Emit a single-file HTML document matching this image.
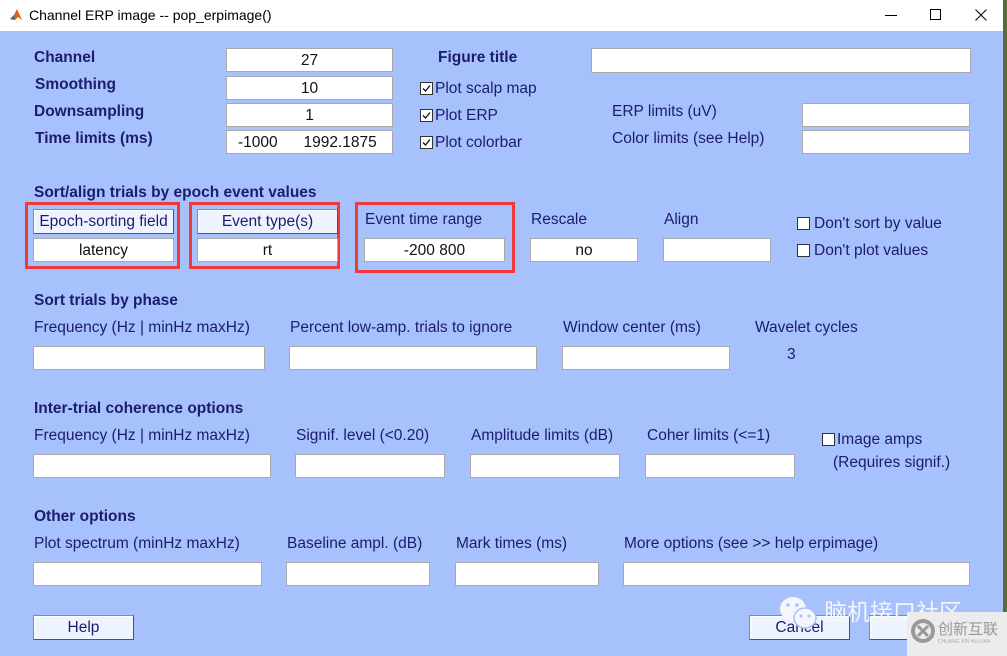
<!DOCTYPE html>
<html><head><meta charset="utf-8"><style>
*{margin:0;padding:0;box-sizing:border-box}
body{width:1007px;height:656px;overflow:hidden;background:#5a6b3a;position:relative;font-family:"Liberation Sans","Noto Sans CJK SC",sans-serif;}
.win{position:absolute;left:0;top:0;width:1003px;height:656px;background:#a7c1fc}
.tb{position:absolute;left:0;top:0;width:1003px;height:31px;background:#fff}
.a{position:absolute;white-space:nowrap}
.l{position:absolute;white-space:nowrap;font-size:15.5px;color:#1c1c6c;line-height:20px}
.b{font-weight:bold}
.i{position:absolute;background:#fff;border:1px solid #a9a9a9;text-align:center;font-size:15.5px;color:#111;line-height:23px}
.btn{position:absolute;background:#eef4ff;border:1px solid #8a8a8a;border-right-color:#555;border-bottom-color:#555;text-align:center;font-size:15.5px;color:#1c1c6c;line-height:23px;box-shadow:inset 1px 1px 0 #fff}
.r{position:absolute;border:3px solid #f03a3a}
.cb{position:absolute;width:13px;height:13px;background:#fff;border:1px solid #333}
</style></head><body>
<div class="win"></div>
<div class="tb"></div>
<svg class="a" style="left:9px;top:8px" width="14" height="14" viewBox="0 0 14 14"><path d="M1 11 L5 7 L8 1 L13 12 L9 9 L6 12 Z" fill="#e06010"/><path d="M1 11 L5 7 L6 12Z" fill="#2a6fb0"/></svg>
<div class="a" style="left:29px;top:7px;font-size:14px;color:#000">Channel ERP image -- pop_erpimage()</div>
<div class="a" style="left:885px;top:15px;width:12px;height:1px;background:#000"></div>
<div class="a" style="left:930px;top:9px;width:11px;height:11px;border:1px solid #000"></div>
<svg class="a" style="left:975px;top:9px" width="12" height="12"><path d="M0.5 0.5L11.5 11.5M11.5 0.5L0.5 11.5" stroke="#000" stroke-width="1"/></svg>

<div class="l b" style="left:34px;top:48px">Channel</div>
<div class="l b" style="left:35px;top:75px">Smoothing</div>
<div class="l b" style="left:34px;top:102px">Downsampling</div>
<div class="l b" style="left:35px;top:129px">Time limits (ms)</div>
<div class="i" style="left:226px;top:48px;width:167px;height:24px">27</div>
<div class="i" style="left:226px;top:76px;width:167px;height:24px">10</div>
<div class="i" style="left:226px;top:103px;width:167px;height:24px">1</div>
<div class="i" style="left:226px;top:130px;width:167px;height:24px;text-align:left;padding-left:11px">-1000&nbsp;&nbsp;&nbsp;&nbsp;&nbsp;&nbsp;1992.1875</div>
<div class="l b" style="left:438px;top:48px">Figure title</div>
<div class="i" style="left:591px;top:48px;width:380px;height:25px"></div>
<svg class="a" style="left:420px;top:82px" width="13" height="13"><rect x="0.5" y="0.5" width="12" height="12" fill="#fff" stroke="#333"/><path d="M3 6.5L5.5 9L10 3.5" fill="none" stroke="#111" stroke-width="1.3"/></svg><div class="l" style="left:435px;top:79px">Plot scalp map</div>
<svg class="a" style="left:420px;top:109px" width="13" height="13"><rect x="0.5" y="0.5" width="12" height="12" fill="#fff" stroke="#333"/><path d="M3 6.5L5.5 9L10 3.5" fill="none" stroke="#111" stroke-width="1.3"/></svg><div class="l" style="left:435px;top:106px">Plot ERP</div>
<svg class="a" style="left:420px;top:136px" width="13" height="13"><rect x="0.5" y="0.5" width="12" height="12" fill="#fff" stroke="#333"/><path d="M3 6.5L5.5 9L10 3.5" fill="none" stroke="#111" stroke-width="1.3"/></svg><div class="l" style="left:435px;top:133px">Plot colorbar</div>
<div class="l" style="left:612px;top:102px">ERP limits (uV)</div>
<div class="l" style="left:612px;top:129px">Color limits (see Help)</div>
<div class="i" style="left:802px;top:103px;width:168px;height:24px"></div>
<div class="i" style="left:802px;top:130px;width:168px;height:24px"></div>

<div class="l b" style="left:34px;top:183px">Sort/align trials by epoch event values</div>
<div class="r" style="left:25px;top:202px;width:155px;height:67px"></div>
<div class="btn" style="left:33px;top:209px;width:141px;height:25px">Epoch-sorting field</div>
<div class="i" style="left:33px;top:238px;width:141px;height:24px">latency</div>
<div class="r" style="left:189px;top:202px;width:151px;height:67px"></div>
<div class="btn" style="left:197px;top:209px;width:141px;height:25px">Event type(s)</div>
<div class="i" style="left:197px;top:238px;width:141px;height:24px">rt</div>
<div class="r" style="left:355px;top:202px;width:160px;height:71px"></div>
<div class="l" style="left:365px;top:210px">Event time range</div>
<div class="i" style="left:364px;top:238px;width:141px;height:24px">-200 800</div>
<div class="l" style="left:531px;top:210px">Rescale</div>
<div class="i" style="left:530px;top:238px;width:108px;height:24px">no</div>
<div class="l" style="left:664px;top:210px">Align</div>
<div class="i" style="left:663px;top:238px;width:108px;height:24px"></div>
<div class="cb" style="left:797px;top:217px"></div><div class="l" style="left:814px;top:214px">Don't sort by value</div>
<div class="cb" style="left:797px;top:244px"></div><div class="l" style="left:814px;top:241px">Don't plot values</div>

<div class="l b" style="left:34px;top:291px">Sort trials by phase</div>
<div class="l" style="left:34px;top:318px">Frequency (Hz | minHz maxHz)</div>
<div class="l" style="left:290px;top:318px">Percent low-amp. trials to ignore</div>
<div class="l" style="left:563px;top:318px">Window center (ms)</div>
<div class="l" style="left:755px;top:318px">Wavelet cycles</div>
<div class="i" style="left:33px;top:346px;width:232px;height:24px"></div>
<div class="i" style="left:289px;top:346px;width:248px;height:24px"></div>
<div class="i" style="left:562px;top:346px;width:168px;height:24px"></div>
<div class="l" style="left:787px;top:345px">3</div>

<div class="l b" style="left:34px;top:399px">Inter-trial coherence options</div>
<div class="l" style="left:34px;top:426px">Frequency (Hz | minHz maxHz)</div>
<div class="l" style="left:296px;top:426px">Signif. level (&lt;0.20)</div>
<div class="l" style="left:471px;top:426px">Amplitude limits (dB)</div>
<div class="l" style="left:647px;top:426px">Coher limits (&lt;=1)</div>
<div class="cb" style="left:822px;top:433px"></div><div class="l" style="left:837px;top:430px">Image amps</div>
<div class="l" style="left:833px;top:453px">(Requires signif.)</div>
<div class="i" style="left:33px;top:454px;width:238px;height:24px"></div>
<div class="i" style="left:295px;top:454px;width:150px;height:24px"></div>
<div class="i" style="left:470px;top:454px;width:150px;height:24px"></div>
<div class="i" style="left:645px;top:454px;width:150px;height:24px"></div>

<div class="l b" style="left:34px;top:507px">Other options</div>
<div class="l" style="left:34px;top:534px">Plot spectrum (minHz maxHz)</div>
<div class="l" style="left:287px;top:534px">Baseline ampl. (dB)</div>
<div class="l" style="left:456px;top:534px">Mark times (ms)</div>
<div class="l" style="left:624px;top:534px">More options (see &gt;&gt; help erpimage)</div>
<div class="i" style="left:33px;top:562px;width:229px;height:24px"></div>
<div class="i" style="left:286px;top:562px;width:144px;height:24px"></div>
<div class="i" style="left:455px;top:562px;width:144px;height:24px"></div>
<div class="i" style="left:623px;top:562px;width:347px;height:24px"></div>

<div class="btn" style="left:33px;top:615px;width:101px;height:25px">Help</div>
<div class="btn" style="left:749px;top:615px;width:101px;height:25px">Cancel</div>
<div class="btn" style="left:869px;top:615px;width:101px;height:25px">Ok</div>

<svg class="a" style="left:778px;top:595px" width="42" height="36"><ellipse cx="15" cy="14" rx="13" ry="12" fill="#f4f6fb"/><ellipse cx="27" cy="23" rx="11" ry="10" fill="#f4f6fb" stroke="#a7c1fc" stroke-width="1.5"/><circle cx="10" cy="10" r="1.8" fill="#a7c1fc"/><circle cx="19" cy="10" r="1.8" fill="#a7c1fc"/><circle cx="23" cy="21" r="1.5" fill="#a7c1fc"/><circle cx="31" cy="21" r="1.5" fill="#a7c1fc"/></svg>
<div class="a" style="left:824px;top:596px;font-size:23px;color:#f4f6fb;font-family:'Noto Sans CJK SC',sans-serif;line-height:28px">脑机接口社区</div>
<div class="a" style="left:907px;top:612px;width:100px;height:44px;background:#ececec"></div>
<svg class="a" style="left:910px;top:618px" width="26" height="26"><circle cx="13" cy="13" r="10" fill="none" stroke="#999" stroke-width="4"/><path d="M8 8L18 18M18 8L8 18" stroke="#999" stroke-width="3"/></svg>
<div class="a" style="left:938px;top:620px;font-size:15px;color:#999;font-family:'Noto Sans CJK SC',sans-serif;line-height:18px">创新互联</div>
<div class="a" style="left:938px;top:639px;font-size:5px;color:#aaa">CHUANG XIN HU LIAN</div>
</body></html>
